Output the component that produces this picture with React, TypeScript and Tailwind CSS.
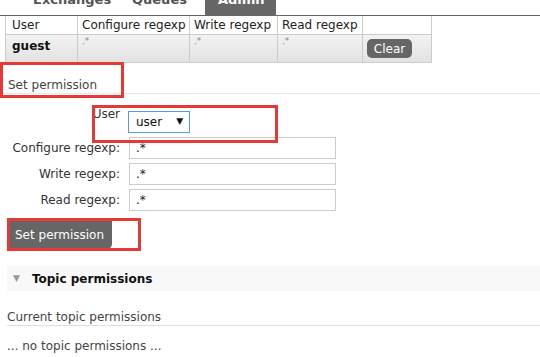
import React from "react";

const font = { fontFamily: '"DejaVu Sans", Verdana, sans-serif' };

function Row({ label, value }: { label: string; value: string }) {
  return (
    <div className="flex items-center h-[26px]">
      <div className="w-[129px] text-right pr-[9px] text-[12px] text-[#333] whitespace-nowrap">{label}</div>
      <div className="w-[207px] h-[22px] border border-[#ccc] bg-white flex items-center pl-[6px] text-[12px] text-[#222]">
        {value}
      </div>
    </div>
  );
}

export default function App() {
  return (
    <div className="relative w-[540px] h-[357px] bg-white overflow-hidden" style={font}>
      {/* tabs */}
      <div className="relative h-[16px] border-b border-[#666]">
        <div className="absolute left-[33px] top-[-8px] text-[13px] font-bold text-[#555] leading-[16px]">Exchanges</div>
        <div className="absolute left-[132px] top-[-8px] text-[13px] font-bold text-[#555] leading-[16px]">Queues</div>
        <div className="absolute left-[205px] top-0 w-[71px] h-[16px] bg-[#666] text-white text-[13px] font-bold">
          <span className="absolute left-[13px] top-[-8px] leading-[16px]">Admin</span>
        </div>
      </div>
      {/* table */}
      <table className="ml-[5px] border-collapse table-fixed text-[12px] w-[426px]">
        <colgroup>
          <col className="w-[72px]" />
          <col className="w-[112px]" />
          <col className="w-[88px]" />
          <col className="w-[85px]" />
          <col className="w-[69px]" />
        </colgroup>
        <thead>
          <tr className="h-[18px]">
            <th className="border border-[#ccc] border-t-0 text-left font-normal px-[6px] text-[#222] whitespace-nowrap">User</th>
            <th className="border border-[#ccc] border-t-0 text-left font-normal px-[4px] text-[#222] whitespace-nowrap">Configure regexp</th>
            <th className="border border-[#ccc] border-t-0 text-left font-normal px-[4px] text-[#222] whitespace-nowrap">Write regexp</th>
            <th className="border border-[#ccc] border-t-0 text-left font-normal px-[4px] text-[#222] whitespace-nowrap">Read regexp</th>
            <th className="border border-[#ccc] border-t-0"></th>
          </tr>
        </thead>
        <tbody>
          <tr className="h-[28px] bg-gradient-to-b from-[#f2f2f2] to-[#e2e2e2]">
            <td className="border border-[#ccc] px-[6px] align-top pt-[2px] font-bold text-[#111]">guest</td>
            <td className="border border-[#ccc] px-[4px] align-top text-[9px] text-[#888]">.*</td>
            <td className="border border-[#ccc] px-[4px] align-top text-[9px] text-[#888]">.*</td>
            <td className="border border-[#ccc] px-[4px] align-top text-[9px] text-[#888]">.*</td>
            <td className="border border-[#ccc] pl-[4px] align-middle">
              <span className="inline-flex items-center justify-center w-[45px] h-[19px] rounded-[5px] bg-[#666] text-white text-[12px]">Clear</span>
            </td>
          </tr>
        </tbody>
      </table>
      {/* Set permission header */}
      <div className="mt-[13px] h-[18px] border-b border-[#e8e8e8] text-[12px] text-[#444] pl-[8px] flex items-center">
        Set permission
      </div>
      {/* form */}
      <div className="mt-[13px] flex items-start h-[27px]">
        <div className="w-[121px] text-right pr-[1px] text-[12px] text-[#333] leading-[14px]">User</div>
        <div className="ml-[7px] mt-[4px] w-[62px] h-[22px] border border-[#5b9bd5] bg-white flex items-center pl-[7px] text-[12px] text-[#111]">
          user
          <span className="ml-[14px] text-[9px]">▼</span>
        </div>
      </div>
      <div className="flex flex-col mt-[1px]">
        <Row label="Configure regexp:" value=".*" />
        <Row label="Write regexp:" value=".*" />
        <Row label="Read regexp:" value=".*" />
      </div>
      <div className="mt-[8px] ml-[9px] w-[103px] h-[28px] bg-[#666] rounded-br-[5px] text-white text-[12px] flex items-center pl-[6px]">
        Set permission
      </div>
      {/* Topic permissions */}
      <div className="mt-[17px] ml-[7px] h-[25px] bg-[#f8f8f8] flex items-center">
        <span className="ml-[6px] text-[9px] text-[#999]">▼</span>
        <span className="ml-[12px] text-[12px] font-bold text-[#111]">Topic permissions</span>
      </div>
      <div className="mt-[17px] ml-[7px] h-[18px] border-b border-[#ddd] text-[12px] text-[#444] flex items-center">
        Current topic permissions
      </div>
      <div className="mt-[11px] ml-[7px] text-[12px] text-[#444]">... no topic permissions ...</div>

      {/* red annotations */}
      <div className="absolute left-[0px] top-[62px] w-[124px] h-[36px] border-[3px] border-[#e53935]" />
      <div className="absolute left-[92px] top-[105px] w-[186px] h-[38px] border-[3px] border-[#e53935]" />
      <div className="absolute left-[7px] top-[218px] w-[134px] h-[33px] border-[3px] border-[#e53935]" />
    </div>
  );
}
